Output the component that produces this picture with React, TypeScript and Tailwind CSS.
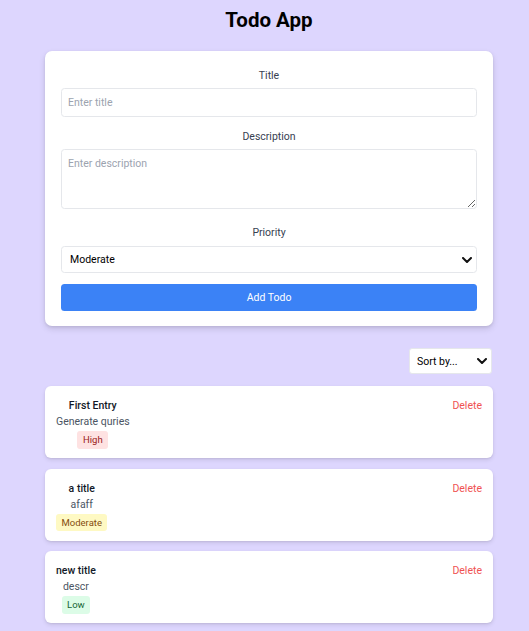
import { useState } from "react"

type Priority = "High" | "Moderate" | "Low"

const todos: { title: string; description: string; priority: Priority }[] = [
  { title: "First Entry", description: "Generate quries", priority: "High" },
  { title: "a title", description: "afaff", priority: "Moderate" },
  { title: "new title", description: "descr", priority: "Low" },
]

const badgeTone: Record<Priority, string> = {
  High: "bg-[#fee2e2] text-[#991b1b]",
  Moderate: "bg-[#fef9c3] text-[#854d0e]",
  Low: "bg-[#dcfce7] text-[#166534]",
}

function Chevron() {
  return (
    <svg
      aria-hidden
      viewBox="0 0 10 6"
      className="pointer-events-none absolute top-1/2 right-[5px] h-[6px] w-[10px] -translate-y-1/2"
    >
      <path
        d="M1 1l4 4 4-4"
        fill="none"
        stroke="#111"
        strokeWidth="2"
        strokeLinecap="round"
        strokeLinejoin="round"
      />
    </svg>
  )
}

export default function App() {
  const [priority, setPriority] = useState("Moderate")

  return (
    <div className="min-h-screen bg-[#ddd6fe] pl-[9px] font-['Roboto','Noto_Sans',sans-serif] text-[10.5px]">
      <div className="mx-auto w-[448px] pt-[6px]">
        <h1 className="text-center text-[20.5px] leading-[28px] font-bold text-black">
          Todo App
        </h1>

        <form
          className="mt-[17px] flex flex-col rounded-[7px] bg-white px-4 pt-4 pb-[15px] shadow-[0_3px_6px_rgba(0,0,0,0.12),0_1px_3px_rgba(0,0,0,0.08)]"
          onSubmit={(e) => e.preventDefault()}
        >
          <label className="pt-px text-center leading-4 text-[#374151]">Title</label>
          <input
            placeholder="Enter title"
            className="mt-[4px] h-[29px] rounded-[3.5px] border border-[#e5e7eb] px-[6px] text-[10.5px] outline-none placeholder:text-[#9ca3af]"
          />

          <label className="mt-[11px] pt-px text-center leading-4 text-[#374151]">
            Description
          </label>
          <textarea
            placeholder="Enter description"
            className="mt-[4px] block h-[60px] rounded-[3.5px] border border-[#e5e7eb] px-[6px] py-[6px] text-[10.5px] outline-none placeholder:text-[#9ca3af]"
          />

          <label className="mt-[15px] pt-px text-center leading-4 text-[#374151]">
            Priority
          </label>
          <div className="relative mt-[5px]">
            <select
              value={priority}
              onChange={(e) => setPriority(e.target.value)}
              className="h-[27px] w-full appearance-none rounded-[3.5px] border border-[#e5e7eb] bg-white pt-px pl-[8px] text-[10.5px] text-black outline-none"
            >
              <option>High</option>
              <option>Moderate</option>
              <option>Low</option>
            </select>
            <Chevron />
          </div>

          <button
            type="submit"
            className="mt-[11px] h-[27px] rounded-[3.5px] bg-[#3b82f6] pt-px text-[10.5px] text-white"
          >
            Add Todo
          </button>
        </form>

        <div className="mt-[22px] flex justify-end">
          <div className="relative mr-px">
            <select
              defaultValue=""
              className="h-[26px] w-[83px] appearance-none rounded-[3px] border border-[#e5e7eb] bg-white pt-px pl-[7px] text-[10.5px] text-black outline-none"
            >
              <option value="">Sort by...</option>
              <option value="priority">Priority</option>
              <option value="title">Title</option>
            </select>
            <Chevron />
          </div>
        </div>

        <ul className="mt-3 flex flex-col gap-[10.5px]">
          {todos.map((todo) => (
            <li
              key={todo.title}
              className="flex items-start justify-between rounded-[6px] bg-white px-[11px] pt-[12px] pb-[9.5px] shadow-[0_2px_4px_rgba(0,0,0,0.1),0_1px_2px_rgba(0,0,0,0.06)]"
            >
              <div className="flex flex-col items-center text-center">
                <span className="leading-4 font-medium text-[#111827]">
                  {todo.title}
                </span>
                <span className="leading-4 text-[#4b5563]">
                  {todo.description}
                </span>
                <span
                  className={`mt-px rounded-[3px] px-[5.5px] text-[9.5px] leading-[17.5px] ${badgeTone[todo.priority]}`}
                >
                  {todo.priority}
                </span>
              </div>
              <button className="leading-4 text-[#f05252]">Delete</button>
            </li>
          ))}
        </ul>
      </div>
    </div>
  )
}
